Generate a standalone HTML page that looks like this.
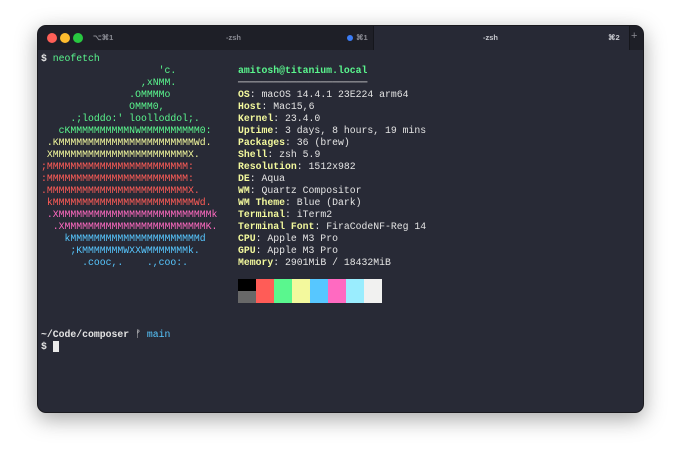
<!DOCTYPE html>
<html><head><style>
body{margin:0;width:679px;height:461px;background:#fff;position:relative;overflow:hidden}
.win{position:absolute;left:37px;top:25px;width:605px;height:386px;background:#282a36;border-radius:9px;box-shadow:0 6px 22px rgba(0,0,0,.35);overflow:hidden;border:1px solid #1a1a1f}
.tb{position:absolute;left:0;top:0;width:605px;height:24px;background:#1e1f27}
.tab2{position:absolute;left:335px;top:0;width:255px;height:24px;background:#272935;border-left:1px solid #15161c;border-right:1px solid #15161c}
.dot{position:absolute;top:7px;width:10px;height:10px;border-radius:50%}
.t{position:absolute;font:bold 7.5px "Liberation Sans",sans-serif;color:#8a8b93}
pre{margin:0;position:absolute;font:9.8px/12px "Liberation Mono",monospace;color:#e4e4e4}
.g{color:#5af78e}.y{color:#f3f99d}.r{color:#ff5c57}.p{color:#ff6ac1}.b{color:#57c7ff}
.k{color:#f3f99d;font-weight:bold}
.sw{position:absolute;width:18px;height:12px}
</style></head><body>
<div class="win">
<div class="tb"></div>
<div class="tab2"></div>
<div class="dot" style="left:9px;background:#fe5f57"></div>
<div class="dot" style="left:22px;background:#febc2e"></div>
<div class="dot" style="left:35px;background:#28c840"></div>
<div class="t" style="left:55px;top:7px">⌥⌘1</div>
<div class="t" style="left:188px;top:7px">-zsh</div>
<div class="dot" style="left:309px;top:9px;width:6px;height:6px;background:#3b7cf5"></div>
<div class="t" style="left:318px;top:7px">⌘1</div>
<div class="t" style="left:445px;top:7px;color:#c8c9cf">-zsh</div>
<div class="t" style="left:570px;top:7px;color:#c8c9cf">⌘2</div>
<div class="t" style="left:593px;top:4px;font-size:11px;font-weight:normal">+</div>
<pre style="left:3px;top:27px"><b>$</b> <span class="g">neofetch</span>
<span class="g">                    'c.
                 ,xNMM.
               .OMMMMo
               OMMM0,
     .;loddo:' loolloddol;.
   cKMMMMMMMMMMNWMMMMMMMMMM0:</span>
<span class="y"> .KMMMMMMMMMMMMMMMMMMMMMMMWd.
 XMMMMMMMMMMMMMMMMMMMMMMMX.</span>
<span class="r">;MMMMMMMMMMMMMMMMMMMMMMMM:
:MMMMMMMMMMMMMMMMMMMMMMMM:
.MMMMMMMMMMMMMMMMMMMMMMMMX.
 kMMMMMMMMMMMMMMMMMMMMMMMMWd.</span>
<span class="p"> .XMMMMMMMMMMMMMMMMMMMMMMMMMMk
  .XMMMMMMMMMMMMMMMMMMMMMMMMK.</span>
<span class="b">    kMMMMMMMMMMMMMMMMMMMMMMd
     ;KMMMMMMMWXXWMMMMMMMk.
       .cooc,.    .,coo:.</span>





<b>~/Code/composer</b> ᚠ <span class="b">main</span>
<b>$</b> <span style="background:#eaeaea">&nbsp;</span></pre>
<pre style="left:200px;top:39px"><span class="g" style="font-weight:bold">amitosh@titanium.local</span>
──────────────────────
<span class="k">OS</span>: macOS 14.4.1 23E224 arm64
<span class="k">Host</span>: Mac15,6
<span class="k">Kernel</span>: 23.4.0
<span class="k">Uptime</span>: 3 days, 8 hours, 19 mins
<span class="k">Packages</span>: 36 (brew)
<span class="k">Shell</span>: zsh 5.9
<span class="k">Resolution</span>: 1512x982
<span class="k">DE</span>: Aqua
<span class="k">WM</span>: Quartz Compositor
<span class="k">WM Theme</span>: Blue (Dark)
<span class="k">Terminal</span>: iTerm2
<span class="k">Terminal Font</span>: FiraCodeNF-Reg 14
<span class="k">CPU</span>: Apple M3 Pro
<span class="k">GPU</span>: Apple M3 Pro
<span class="k">Memory</span>: 2901MiB / 18432MiB</pre>
<div class="sw" style="left:200px;top:253px;background:#000"></div><div class="sw" style="left:200px;top:265px;background:#686868"></div>
<div class="sw" style="left:218px;top:253px;height:24px;background:#ff5c57"></div>
<div class="sw" style="left:236px;top:253px;height:24px;background:#5af78e"></div>
<div class="sw" style="left:254px;top:253px;height:24px;background:#f3f99d"></div>
<div class="sw" style="left:272px;top:253px;height:24px;background:#57c7ff"></div>
<div class="sw" style="left:290px;top:253px;height:24px;background:#ff6ac1"></div>
<div class="sw" style="left:308px;top:253px;height:24px;background:#9aedfe"></div>
<div class="sw" style="left:326px;top:253px;height:24px;background:#f1f1f0"></div>
</div>
</body></html>
